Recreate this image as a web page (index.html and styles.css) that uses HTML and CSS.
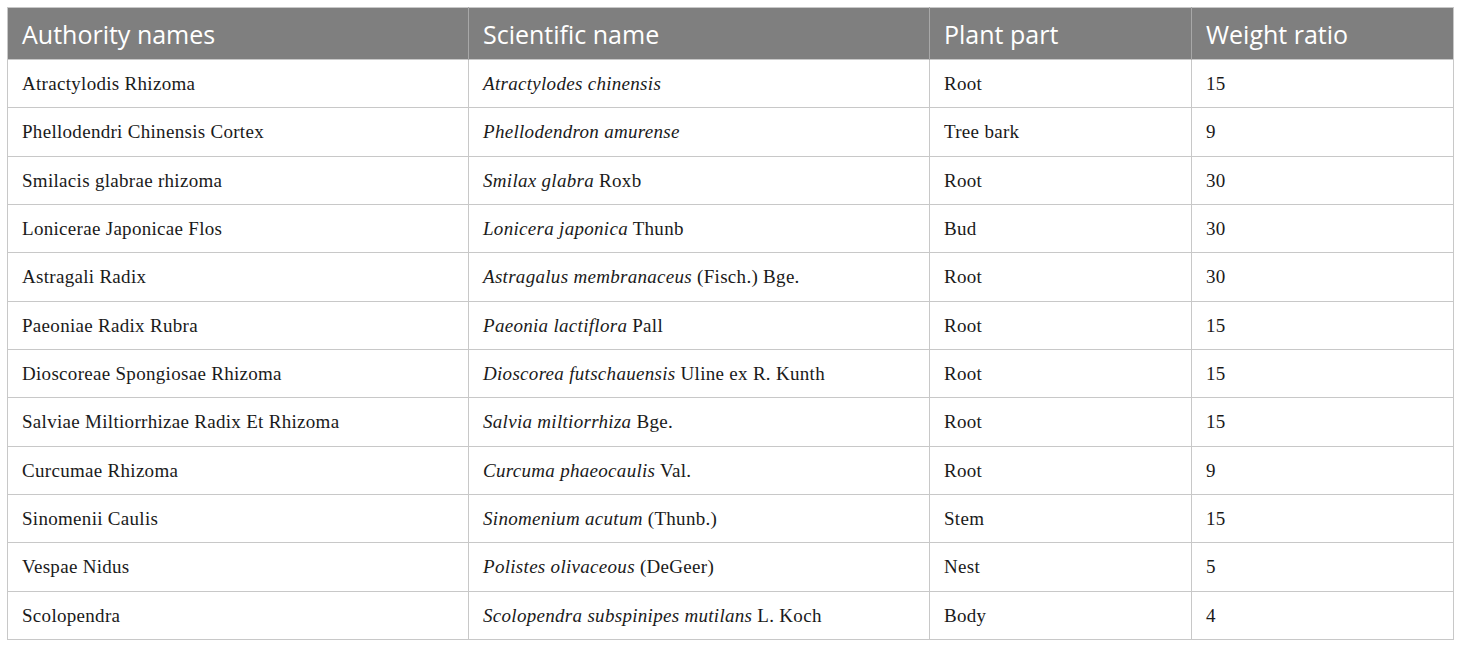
FILE: index.html
```html
<!DOCTYPE html>
<html>
<head>
<meta charset="utf-8">
<link rel="stylesheet" href="styles.css">
</head>
<body>
<table class="tbl">
<colgroup>
<col class="c1"><col class="c2"><col class="c3"><col class="c4">
</colgroup>
<thead>
<tr><th>Authority names</th><th>Scientific name</th><th>Plant part</th><th>Weight ratio</th></tr>
</thead>
<tbody>
<tr><td>Atractylodis Rhizoma</td><td><i>Atractylodes chinensis</i></td><td>Root</td><td>15</td></tr>
<tr><td>Phellodendri Chinensis Cortex</td><td><i>Phellodendron amurense</i></td><td>Tree bark</td><td>9</td></tr>
<tr><td>Smilacis glabrae rhizoma</td><td><i>Smilax glabra</i> Roxb</td><td>Root</td><td>30</td></tr>
<tr><td>Lonicerae Japonicae Flos</td><td><i>Lonicera japonica</i> Thunb</td><td>Bud</td><td>30</td></tr>
<tr><td>Astragali Radix</td><td><i>Astragalus membranaceus</i> (Fisch.) Bge.</td><td>Root</td><td>30</td></tr>
<tr><td>Paeoniae Radix Rubra</td><td><i>Paeonia lactiflora</i> Pall</td><td>Root</td><td>15</td></tr>
<tr><td>Dioscoreae Spongiosae Rhizoma</td><td><i>Dioscorea futschauensis</i> Uline ex R. Kunth</td><td>Root</td><td>15</td></tr>
<tr><td>Salviae Miltiorrhizae Radix Et Rhizoma</td><td><i>Salvia miltiorrhiza</i> Bge.</td><td>Root</td><td>15</td></tr>
<tr><td>Curcumae Rhizoma</td><td><i>Curcuma phaeocaulis</i> Val.</td><td>Root</td><td>9</td></tr>
<tr><td>Sinomenii Caulis</td><td><i>Sinomenium acutum</i> (Thunb.)</td><td>Stem</td><td>15</td></tr>
<tr><td>Vespae Nidus</td><td><i>Polistes olivaceous</i> (DeGeer)</td><td>Nest</td><td>5</td></tr>
<tr><td>Scolopendra</td><td><i>Scolopendra subspinipes mutilans</i> L. Koch</td><td>Body</td><td>4</td></tr>
</tbody>
</table>
</body>
</html>
```
FILE: styles.css
```css
html, body {
  margin: 0;
  background: #ffffff;
}
body {
  padding: 7px;
}
.tbl {
  width: 1446px;
  border-collapse: collapse;
  table-layout: fixed;
  border: 1px solid #c8c8c8;
}
.c1 { width: 461px; }
.c2 { width: 461px; }
.c3 { width: 262px; }
.c4 { width: 262px; }
.tbl th {
  background: #7f7f7f;
  color: #ffffff;
  font-family: "Open Sans", sans-serif;
  font-weight: 400;
  font-size: 25px;
  text-align: left;
  height: 52px;
  padding: 0 0 0 14px;
  box-sizing: border-box;
  border-left: 1px solid #a8a8a8;
  vertical-align: middle;
}
.tbl th:first-child { border-left: none; }
.tbl td {
  font-family: "Liberation Serif", serif;
  font-size: 19px;
  letter-spacing: 0.3px;
  color: #1a1a1a;
  height: 48.34px;
  padding: 1px 0 0 14px;
  box-sizing: border-box;
  border-top: 1px solid #c8c8c8;
  border-left: 1px solid #c8c8c8;
  vertical-align: middle;
}
.tbl td:first-child { border-left: none; }
```
